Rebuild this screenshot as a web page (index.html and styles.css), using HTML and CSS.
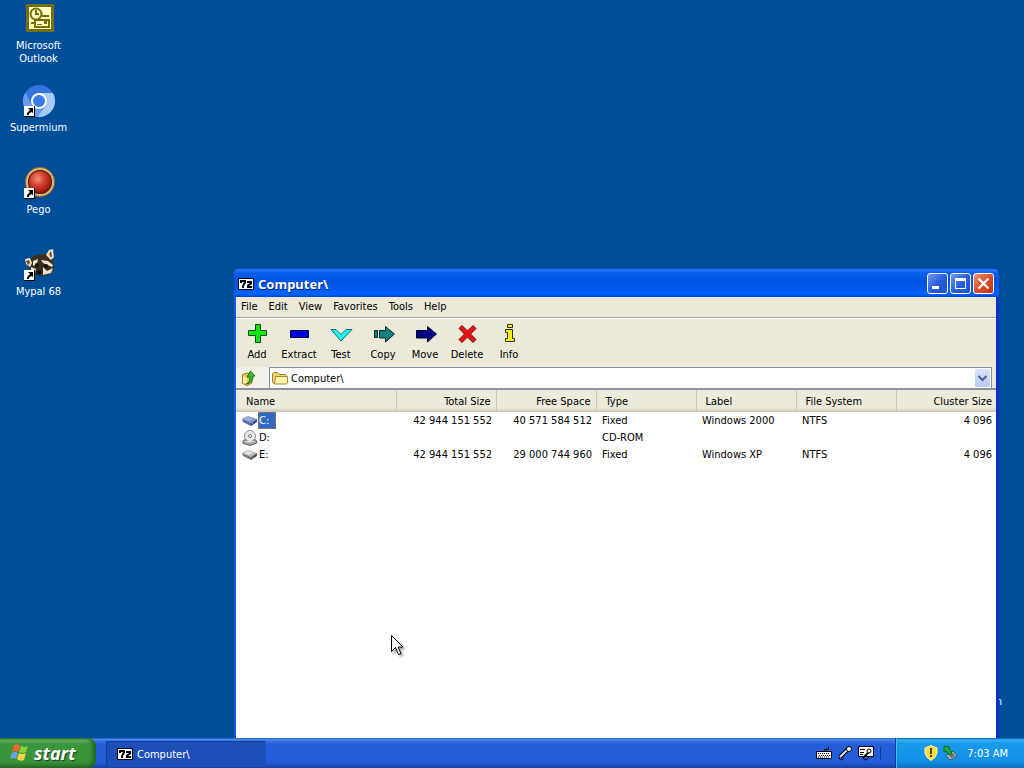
FILE: index.html
```html
<!DOCTYPE html>
<html lang="en">
<head>
<meta charset="utf-8">
<title>Computer</title>
<link rel="stylesheet" href="styles.css">
</head>
<body>
<svg class="defs" width="0" height="0" aria-hidden="true">
  <defs>
    <symbol id="seven-zip" viewBox="0 0 16 12">
      <path fill="#000" d="M0 0h16v12H0z"/><path fill="#fff" d="M1 1h14v10H1z"/>
      <path fill="#000" d="M2 2h6v3L6 8v2H4V8l2-4H4v1H2zM9 3h5v3l-3 2h3v2H9V7l3-2H9z"/>
    </symbol>
    <symbol id="shortcut" viewBox="0 0 11 11">
      <path fill="#000" d="M0 0h11v11H0z"/><path fill="#fff" d="M0 0h10v10H0z"/>
      <path fill="#000" d="M4 2h5v5L7 6 5 8v1H3V7l3-3z"/>
    </symbol>
    <symbol id="drive" viewBox="0 0 16 10">
      <path fill="#b8b9bd" d="M0 3 6 0l9 3-6 4z"/><path fill="#e6e6ea" d="m2 3 4-2 5 2-4 2z"/>
      <path fill="#77787d" d="m0 3 9 4v3L1 6z"/><path fill="#4e5054" d="m9 7 6-4v3l-6 4z"/><path fill="#8fe08f" d="M10 7h1v1h-1z"/>
    </symbol>
    <symbol id="drive-blue" viewBox="0 0 16 10">
      <path fill="#8192cf" d="M0 3 6 0l9 3-6 4z"/><path fill="#a2afdf" d="m2 3 4-2 5 2-4 2z"/>
      <path fill="#5368aa" d="m0 3 9 4v3L1 6z"/><path fill="#36498a" d="m9 7 6-4v3l-6 4z"/><path fill="#79d0ad" d="M10 7h1v1h-1z"/>
    </symbol>
  </defs>
</svg>
<div class="screen">
  <main class="desktop">
    <nav class="shortcuts" aria-label="Desktop">
      <a class="shortcut" href="#outlook">
        <svg class="shortcut-icon" viewBox="0 0 32 32" aria-hidden="true">
          <path fill="#75700f" d="M3 1h28v28H3z"/><path fill="#fffcc4" d="M6 4h22v22H6z"/>
          <circle cx="13" cy="11" r="5.500" fill="#fffcc4" stroke="#75700f" stroke-width="2"/>
          <path d="M13 7v4h3" fill="none" stroke="#75700f" stroke-width="2"/>
          <path fill="#fffcc4" stroke="#75700f" stroke-width="2" d="M12 17h14v7H12z"/>
          <path fill="#75700f" d="M21 18h3v3h-3zM14 21h5v1h-5zM19 12h7v2h-7zM8 19h3v2H8z"/>
        </svg>
        <span>Microsoft<br>Outlook</span>
      </a>
      <a class="shortcut" href="#supermium">
        <svg class="shortcut-icon" viewBox="0 0 32 32" aria-hidden="true">
          <clipPath id="disc"><circle cx="16" cy="16" r="16"/></clipPath>
          <g clip-path="url(#disc)">
            <path fill="#3474e0" d="M0 0h32v32H0z"/>
            <path fill="#a9c8fa" d="M16 8h16v24H14l9-12z"/>
            <path fill="#6d9cf0" d="M2 7 9 20l7 4h3l-4 8H0V7z"/>
          </g>
          <circle cx="16" cy="16" r="8" fill="#fff"/><circle cx="16" cy="16" r="6" fill="#3b7be8"/>
          <use href="#shortcut" x="1" y="21" width="11" height="11"/>
        </svg>
        <span>Supermium</span>
      </a>
      <a class="shortcut" href="#pego">
        <svg class="shortcut-icon" viewBox="0 0 32 32" aria-hidden="true">
          <defs><radialGradient id="ruby" cx=".4" cy=".35" r=".7"><stop offset="0" stop-color="#f0907a"/><stop offset=".5" stop-color="#d23a28"/><stop offset="1" stop-color="#8d120d"/></radialGradient></defs>
          <circle cx="17" cy="15" r="15" fill="#9a6b34"/><circle cx="17" cy="15" r="13" fill="none" stroke="#dcb672" stroke-width="2"/>
          <circle cx="17" cy="15" r="12" fill="#4c1a0c"/><circle cx="17" cy="15" r="11" fill="url(#ruby)"/>
          <use href="#shortcut" x="1" y="21" width="11" height="11"/>
        </svg>
        <span>Pego</span>
      </a>
      <a class="shortcut" href="#mypal">
        <svg class="shortcut-icon" viewBox="0 0 32 32" aria-hidden="true">
          <path fill="#3b2e20" d="m6 11 6-5 11-1 7 5 1 10-5 6-9 1-8-3-5-8z"/>
          <path fill="#ede1c4" d="m2 10 5-1 2 5-2 4-4-3zM23 6l3-5 4-1 1 8-3 3z"/>
          <path fill="#7b4a2d" d="m26 5 2-3 1 5-1 2zM3 12l3-1 1 3-2 2z"/>
          <path fill="#ede1c4" d="m10 12 5-2-1 5-4 2zM18 11l7 1 5 4-1 2-9-4zM20 18l4 4 6-3-2 5-8 2zM8 18l5 2-1 4-4-2z"/>
          <circle cx="14" cy="16" r="2" fill="#111"/><circle cx="23" cy="17" r="2" fill="#111"/><path fill="#111" d="m13 22 5-1 1 3-4 2z"/>
          <use href="#shortcut" x="1" y="21" width="11" height="11"/>
        </svg>
        <span>Mypal 68</span>
      </a>
    </nav>

    <span class="covered-label">n</span>

    <section class="window" aria-label="Computer">
      <header class="titlebar">
        <svg width="16" height="12" aria-hidden="true"><use href="#seven-zip"/></svg>
        <h1>Computer\</h1>
        <div class="caption-buttons">
          <button class="caption" aria-label="Minimize"><svg viewBox="0 0 19 19"><path fill="#fff" d="M4 12h7v3H4z"/></svg></button>
          <button class="caption" aria-label="Maximize"><svg viewBox="0 0 19 19"><path fill="#fff" fill-rule="evenodd" d="M4 4h11v11H4zm1 3v7h9V7z"/></svg></button>
          <button class="caption close" aria-label="Close"><svg viewBox="0 0 19 19"><path stroke="#fff" stroke-width="2.400" d="m4.500 4.500 10 10M14.500 4.500l-10 10"/></svg></button>
        </div>
      </header>
      <div class="client">
        <div class="menubar">
          <button>File</button><button>Edit</button><button>View</button><button>Favorites</button><button>Tools</button><button>Help</button>
        </div>
        <div class="toolbar">
          <button><svg viewBox="0 0 24 24"><path fill="#10e610" stroke="#064b06" d="M10.500 2.500h5v6h6v5h-6v7h-5v-7h-7v-5h7z"/></svg>Add</button>
          <button><svg viewBox="0 0 24 24"><path fill="#0000e0" stroke="#000040" d="M3.500 8.500h18v7h-18z"/></svg>Extract</button>
          <button><svg viewBox="0 0 24 24"><path fill="#20f4f4" stroke="#157070" d="M2 7.500h5l5 5 5-5h6L12 19z"/></svg>Test</button>
          <button><svg viewBox="0 0 24 24"><path fill="#108080" stroke="#062d2d" d="M3.500 8.500h3v7h-3zM8.500 8.500h6v-4l9 7.500-9 8v-4h-6z"/></svg>Copy</button>
          <button><svg viewBox="0 0 24 24"><path fill="#000088" stroke="#000020" d="M3.500 8.500h11v-4l9 7.500-9 8v-4h-11z"/></svg>Move</button>
          <button><svg viewBox="0 0 24 24"><path fill="#ed1111" stroke="#6b1010" d="m7 3.500 5.500 5.500L18 3.500l3 3-5.500 5.500 5.500 5.500-3 3-5.500-5.500L7 20.500l-3-3L9.500 12 4 6.500z"/></svg>Delete</button>
          <button><svg viewBox="0 0 24 24"><path fill="#f4f41a" stroke="#303000" d="M10.500 2.500h5v3h-5zM8.500 7.500h7v9h2v3h-9v-3h2v-6h-2z"/></svg>Info</button>
        </div>
        <div class="addressbar">
          <button class="up" aria-label="Up one level"><svg viewBox="0 0 16 16"><path fill="#e9c84d" stroke="#9c862d" d="M1.500 4.500 6 3l5 2v8l-5 2.500-4.500-2z"/><path fill="#ffed9b" d="m2 6 4 2v6l-4-1z"/><path fill="#35bb32" stroke="#10751b" d="M5 14c3-1 4-3 4-7H6l3.500-6L14 6h-2c0 5-2 7-7 8z"/></svg></button>
          <div class="combo">
            <svg class="folder" viewBox="0 0 16 14" aria-hidden="true"><path fill="#efd775" stroke="#9b842d" d="M.5 11.500V2.500l1-1h4l2 2h6l1 1v8h-13z"/><path fill="#fff1a9" stroke="#a28a35" d="M3.500 5.500h12v6l-1 1.500H2.500z"/></svg>
            <select aria-label="Address"><option>Computer\</option></select>
            <svg class="drop" viewBox="0 0 15 17" aria-hidden="true"><path fill="none" stroke="#4d6185" stroke-width="2" d="m3.500 6.500 4 4 4-4"/></svg>
          </div>
        </div>
        <table class="files">
          <colgroup><col class="name"><col><col><col><col><col><col class="last"></colgroup>
          <thead><tr><th>Name</th><th class="num">Total Size</th><th class="num">Free Space</th><th>Type</th><th>Label</th><th>File System</th><th class="num">Cluster Size</th></tr></thead>
          <tbody>
            <tr><td><span class="entry"><svg viewBox="0 0 16 16"><use href="#drive-blue" y="3" width="16" height="10"/></svg><span class="selected">C:</span></span></td><td class="num">42 944 151 552</td><td class="num">40 571 584 512</td><td>Fixed</td><td>Windows 2000</td><td>NTFS</td><td class="num">4 096</td></tr>
            <tr><td><span class="entry"><svg viewBox="0 0 16 16"><path fill="#a0a1a5" stroke="#66676c" d="m1 11 4-3 9 2 1 3-7 2.500-7-2z"/><circle cx="8" cy="6" r="5.500" fill="#e8e8ec" stroke="#8f9096"/><circle cx="8" cy="6" r="1.500" fill="#fff" stroke="#77787d"/><path fill="#dedee2" d="m2 11 5 2 7-2z"/></svg><span>D:</span></span></td><td></td><td></td><td>CD-ROM</td><td></td><td></td><td></td></tr>
            <tr><td><span class="entry"><svg viewBox="0 0 16 16"><use href="#drive" y="3" width="16" height="10"/></svg><span>E:</span></span></td><td class="num">42 944 151 552</td><td class="num">29 000 744 960</td><td>Fixed</td><td>Windows XP</td><td>NTFS</td><td class="num">4 096</td></tr>
          </tbody>
        </table>
      </div>
    </section>
    <svg class="pointer" viewBox="0 0 16 24" aria-hidden="true"><path fill="#fff" stroke="#000" d="M1.500 1.500v16l4-4 3 7 2.500-1-3-6.500h5z"/></svg>
  </main>

  <footer class="taskbar">
    <button class="start">
      <svg viewBox="0 0 20 20" aria-hidden="true"><path fill="#f26530" d="M4 2q4-2 6 1L8 9Q5 7 2 9z"/><path fill="#8bd13c" d="M11 3q4 2 7 0l-2 6q-3 2-7 0z"/><path fill="#6aa1ef" d="M2 10q3-2 6 0l-2 6q-3-2-6 0z"/><path fill="#fbd53a" d="M9 10q3 2 7 0l-2 7q-4 2-7-1z"/></svg>
      start
    </button>
    <button class="task"><svg width="16" height="12" aria-hidden="true"><use href="#seven-zip"/></svg>Computer\</button>
    <div class="langbar">
      <svg viewBox="0 0 16 16" aria-hidden="true"><path fill="none" stroke="#000" d="M8.500 6V4.500h4V2"/><path fill="#fff" stroke="#000" d="M.5 6.500h15v7H.5z"/><path stroke="#000" stroke-dasharray="1 1" d="M2 8.500h12M3 10.500h11M2 12h12"/></svg>
      <svg viewBox="0 0 16 16" aria-hidden="true"><path stroke="#000" stroke-width="4" d="m3 12 8-8"/><path stroke="#e4e4e4" stroke-width="2" d="m3 12 8-8"/><circle cx="12" cy="4" r="2.500" fill="#fff" stroke="#000"/><path fill="none" stroke="#000" d="M2 12c0 4 4 3 5 1"/></svg>
      <svg viewBox="0 0 16 16" aria-hidden="true"><path fill="#fff" stroke="#000" d="M.5 1.500h15v10H.5z"/><path stroke="#000" d="M2 4.500h5M2 7.500h4M2 9.500h3"/><path stroke="#000" stroke-width="2" d="m5 13 7-7"/><circle cx="11" cy="6" r="2" fill="#fff" stroke="#000"/><path fill="none" stroke="#000" d="M5 13c1 3 5 2 6-1"/></svg>
    </div>
    <div class="tray">
      <svg viewBox="0 0 16 16" aria-hidden="true"><path fill="#f7dc3c" stroke="#fff6b0" d="m8 .5 6 2.500v5q-1 5-6 7.500Q3 13 2 8V3z"/><path fill="#5b4200" d="M7 3h2v6H7zM7 10h2v2H7z"/></svg>
      <svg viewBox="0 0 16 16" aria-hidden="true"><path fill="#b8bdc2" stroke="#4c5258" d="m4 10 7-4 4 5-7 4z"/><path fill="#65717a" d="m7 10 4-2 2 3-4 2z"/><path fill="#24a83b" stroke="#0b6b25" d="m2 1 6 1-1 2 3 4-3 2-3-4-2 1z"/></svg>
      <time>7:03 AM</time>
    </div>
  </footer>
</div>
</body>
</html>
```
FILE: styles.css
```css
* { box-sizing: border-box; }
body { margin: 0; font: 11px/13px "DejaVu Sans Condensed", "Noto Sans", sans-serif; color: #000; }
button, select { font: inherit; color: inherit; background: none; border: 0; padding: 0; margin: 0; }
svg { display: block; flex: none; }
.defs { position: absolute; }
.screen { display: flex; flex-direction: column; height: 100vh; overflow: hidden; background: #004e98; }
.desktop { position: relative; flex: 1; min-height: 0; overflow: hidden; }

.shortcuts { display: flex; flex-direction: column; width: 77px; padding-top: 3px; }
.shortcut { display: flex; flex-direction: column; align-items: center; gap: 4px; height: 82px; color: #fff; text-align: center; text-decoration: none; }
.shortcut-icon { width: 32px; height: 32px; }
.covered-label { position: absolute; right: 22px; bottom: 30px; color: #fff; }

.window { position: absolute; left: 234px; right: 25px; top: 268px; bottom: 0; display: flex; flex-direction: column; padding: 0 3px 0 2px; background: linear-gradient(90deg, #1a55e6 50%, #0a2fc8 50%); border-radius: 6px 6px 0 0; overflow: hidden; }
.titlebar { display: flex; align-items: center; gap: 4px; height: 29px; margin: 0 -3px 0 -2px; padding: 2px 5px 0 4px; background: linear-gradient(#0b3fb5 0, #2a7cf5 2px, #0a5ceb 5px, #0054e3 14px, #0059ee 20px, #0063ff 26px, #0046c8 29px); color: #fff; }
.titlebar h1 { flex: 1; margin: 0; font: bold 13px/16px "Noto Sans", sans-serif; text-shadow: 1px 1px #0a2a86; }
.caption-buttons { display: flex; gap: 2px; }
.caption { width: 21px; height: 21px; border: 1px solid #fff; border-radius: 3px; background: linear-gradient(135deg, #739bf2, #2a5fdc 50%, #1e50c9); }
.caption.close { background: linear-gradient(135deg, #ee9276, #dd4d28 50%, #bd3612); }
.caption svg { width: 19px; height: 19px; }

.client { flex: 1; min-height: 0; background: #fff; }
.menubar { display: flex; align-items: center; gap: 11px; height: 20px; padding: 0 5px 2px; background: #ece9d8; }
.toolbar { display: flex; height: 50px; padding: 4px 0 0; border-top: 1px solid #aca899; box-shadow: inset 0 1px #fff; background: #ece9d8; }
.toolbar button { display: flex; flex-direction: column; align-items: center; gap: 2px; width: 42px; white-space: nowrap; }
.toolbar svg { width: 24px; height: 24px; }
.addressbar { display: flex; height: 23px; padding-right: 4px; background: #ece9d8; border-bottom: 2px solid #8c8ea4; }
.up { display: flex; align-items: center; width: 33px; padding-left: 5px; background: #f3f1e8; }
.up svg { width: 16px; height: 16px; }
.combo { display: flex; flex: 1; align-items: center; gap: 3px; padding: 0 1px 0 2px; background: #fff; border: 1px solid #8292a8; border-bottom: 0; }
.folder { width: 16px; height: 14px; }
.combo select { flex: 1; appearance: none; outline: 0; }
.drop { width: 15px; height: 18px; border-radius: 2px; background: linear-gradient(#dce6fd, #b5c8f5); }

.files { width: 100%; table-layout: fixed; border-collapse: collapse; }
.files col { width: 100px; }
.files col.name { width: 160px; }
.files col.last { width: auto; }
.files th { height: 22px; padding: 0 5px 0 9px; font-weight: normal; text-align: left; border-right: 1px solid #c9c5b2; background: linear-gradient(#ebeadb 0, #ebeadb 18px, #dad6c5 20px, #c9c5b2 22px); }
.files th:first-child { padding-left: 10px; }
.files th:last-child { border-right: 0; padding-right: 4px; }
.files td { height: 17px; padding: 0 4px 0 6px; white-space: nowrap; }
.files .num { text-align: right; }
.entry { display: flex; align-items: center; line-height: 17px; }
.entry svg { width: 16px; height: 16px; }
.entry span { padding: 0 7px 0 1px; }
.entry .selected { background: #316ac5; color: #fff; outline: 1px dotted #b8813b; outline-offset: -1px; }
.pointer { position: absolute; left: 390px; top: 634px; width: 16px; height: 24px; filter: drop-shadow(2px 2px 1px rgb(0 0 0 / 35%)); }

.taskbar { display: flex; height: 30px; background: linear-gradient(#1941a5 0, #4d8cf4 1px, #3a75ea 3px, #245edb 6px, #245ddb 24px, #1941a5 30px); color: #fff; }
.start { display: flex; align-items: center; gap: 4px; width: 96px; margin-right: 10px; padding: 0 0 0 10px; border-radius: 0 8px 8px 0; background: linear-gradient(#2c7b2b 0, #6ab268 2px, #3c973c 6px, #389238 24px, #256d27 30px); box-shadow: inset -3px 0 4px #1e601e; font: italic bold 18px/24px "Noto Sans", sans-serif; text-shadow: 1px 1px 1px #203c20; }
.start svg { width: 20px; height: 20px; }
.task { display: flex; align-items: center; gap: 4px; width: 160px; height: 26px; margin-top: 3px; padding: 0 11px; border-radius: 2px; background: #1d4fb9; box-shadow: inset 1px 1px 1px #143b91; }
.langbar { display: flex; align-items: center; gap: 5px; margin: 0 14px 0 auto; }
.langbar svg, .tray svg { width: 16px; height: 16px; }
.langbar::after { content: ""; width: 1px; height: 13px; margin-left: 1px; background: #133a91; }
.tray { display: flex; align-items: center; gap: 3px; width: 129px; padding: 0 16px 0 27px; border-left: 1px solid #0b3d9c; background: linear-gradient(#0c59b9 0, #3ab5f4 2px, #189bec 5px, #1290e8 23px, #0d6fc0 30px); box-shadow: inset 1px 0 #45c0f6; }
.tray time { margin-left: auto; white-space: nowrap; }
```
